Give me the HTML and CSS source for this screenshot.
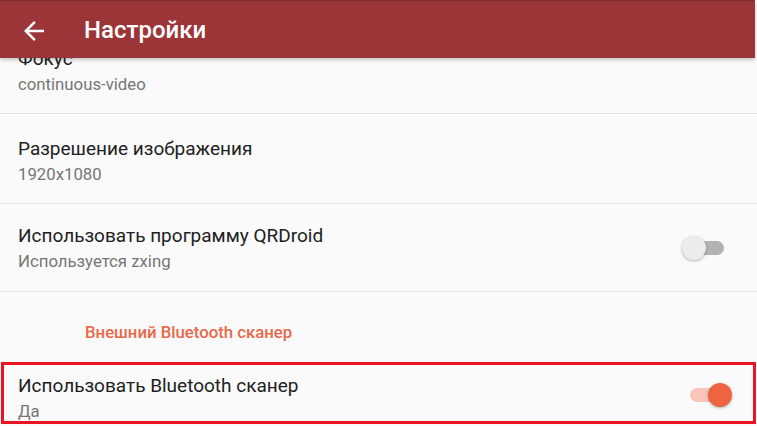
FILE: index.html
```html
<!DOCTYPE html>
<html>

<head>
    <meta charset="utf-8">
    <title>Настройки</title>
    <link rel="stylesheet" href="styles.css">
</head>

<body>
    <div class="screen">
        <header class="toolbar">
            <svg class="nav-back" viewBox="0 0 24 24">
                <path d="M20 11H7.83l5.59-5.59L12 4l-8 8 8 8 1.41-1.41L7.83 13H20v-2z" />
            </svg>
            <h1 class="toolbar-title">Настройки</h1>
        </header>

        <div class="prefs">
            <div class="pref">
                <div class="pref-text">
                    <div class="pref-title">Фокус</div>
                    <div class="pref-summary">continuous-video</div>
                </div>
            </div>

            <div class="pref">
                <div class="pref-text">
                    <div class="pref-title">Разрешение изображения</div>
                    <div class="pref-summary">1920x1080</div>
                </div>
            </div>

            <div class="pref pref-switch">
                <div class="pref-text">
                    <div class="pref-title">Использовать программу QRDroid</div>
                    <div class="pref-summary">Используется zxing</div>
                </div>
                <span class="switch">
                    <span class="switch-track"></span>
                    <span class="switch-thumb"></span>
                </span>
            </div>

            <div class="pref-category">Внешний Bluetooth сканер</div>

            <!-- рамка вокруг выделенного пункта -->
            <div class="highlight">
                <div class="pref pref-switch">
                    <div class="pref-text">
                        <div class="pref-title">Использовать Bluetooth сканер</div>
                        <div class="pref-summary">Да</div>
                    </div>
                    <span class="switch on">
                        <span class="switch-track"></span>
                        <span class="switch-thumb"></span>
                    </span>
                </div>
            </div>
        </div>
    </div>
</body>

</html>
```

FILE: styles.css
```css
* {
    box-sizing: border-box;
    font-family: Roboto, "Noto Sans", Arial, sans-serif;
}

body {
    margin: 0;
    background-color: #fafafa;
}

.screen {
    height: 426px;
    overflow: hidden;
    background-color: #fafafa;
}

.toolbar {
    position: relative;
    z-index: 1;
    display: flex;
    align-items: center;
    height: 58px;
    margin-right: 2px;
    background-color: #9c3538;
    border-top: 1px solid #7c2a2c;
    box-shadow: 0 2px 4px rgba(0, 0, 0, 0.22);
}

.nav-back {
    width: 30px;
    height: 30px;
    margin-left: 19px;
    margin-top: 2px;
    fill: #ffffff;
}

.toolbar-title {
    margin: 0 0 0 35px;
    font-size: 24px;
    font-weight: 500;
    color: #ffffff;
}

.prefs {
    margin-top: -34px;
}

.pref {
    display: flex;
    align-items: center;
    padding: 24px 25px 19px 18px;
    border-bottom: 1px solid #e2e2e2;
}

.pref-switch {
    padding: 21px 25px 20px 18px;
}

.pref-text {
    flex: 1;
}

.pref-title {
    font-size: 19px;
    line-height: 22px;
    color: #212121;
}

.pref-summary {
    margin-top: 4px;
    font-size: 16.75px;
    line-height: 20px;
    color: #767676;
}

.pref-category {
    padding: 30px 0 20px 85px;
    font-size: 16.75px;
    line-height: 20px;
    font-weight: 500;
    color: #e8694a;
}

.highlight {
    margin: 0 1px;
    border: 3px solid #e8141f;
}

.highlight .pref {
    padding: 10px 21px 0 14px;
    border-bottom: none;
}

.highlight .switch {
    margin-bottom: 6px;
}

.switch {
    display: grid;
    align-items: center;
    width: 50px;
    height: 24px;
}

.switch>span {
    grid-area: 1 / 1;
}

.switch-track {
    justify-self: center;
    width: 34px;
    height: 14px;
    border-radius: 7px;
    background-color: #b3b3b3;
}

.switch-thumb {
    justify-self: start;
    width: 24px;
    height: 24px;
    border-radius: 50%;
    background-color: #ececec;
    box-shadow: 0 1px 3px rgba(0, 0, 0, 0.3);
}

.switch.on .switch-track {
    background-color: #f9c6b9;
}

.switch.on .switch-thumb {
    justify-self: end;
    background-color: #ee6443;
}
```
